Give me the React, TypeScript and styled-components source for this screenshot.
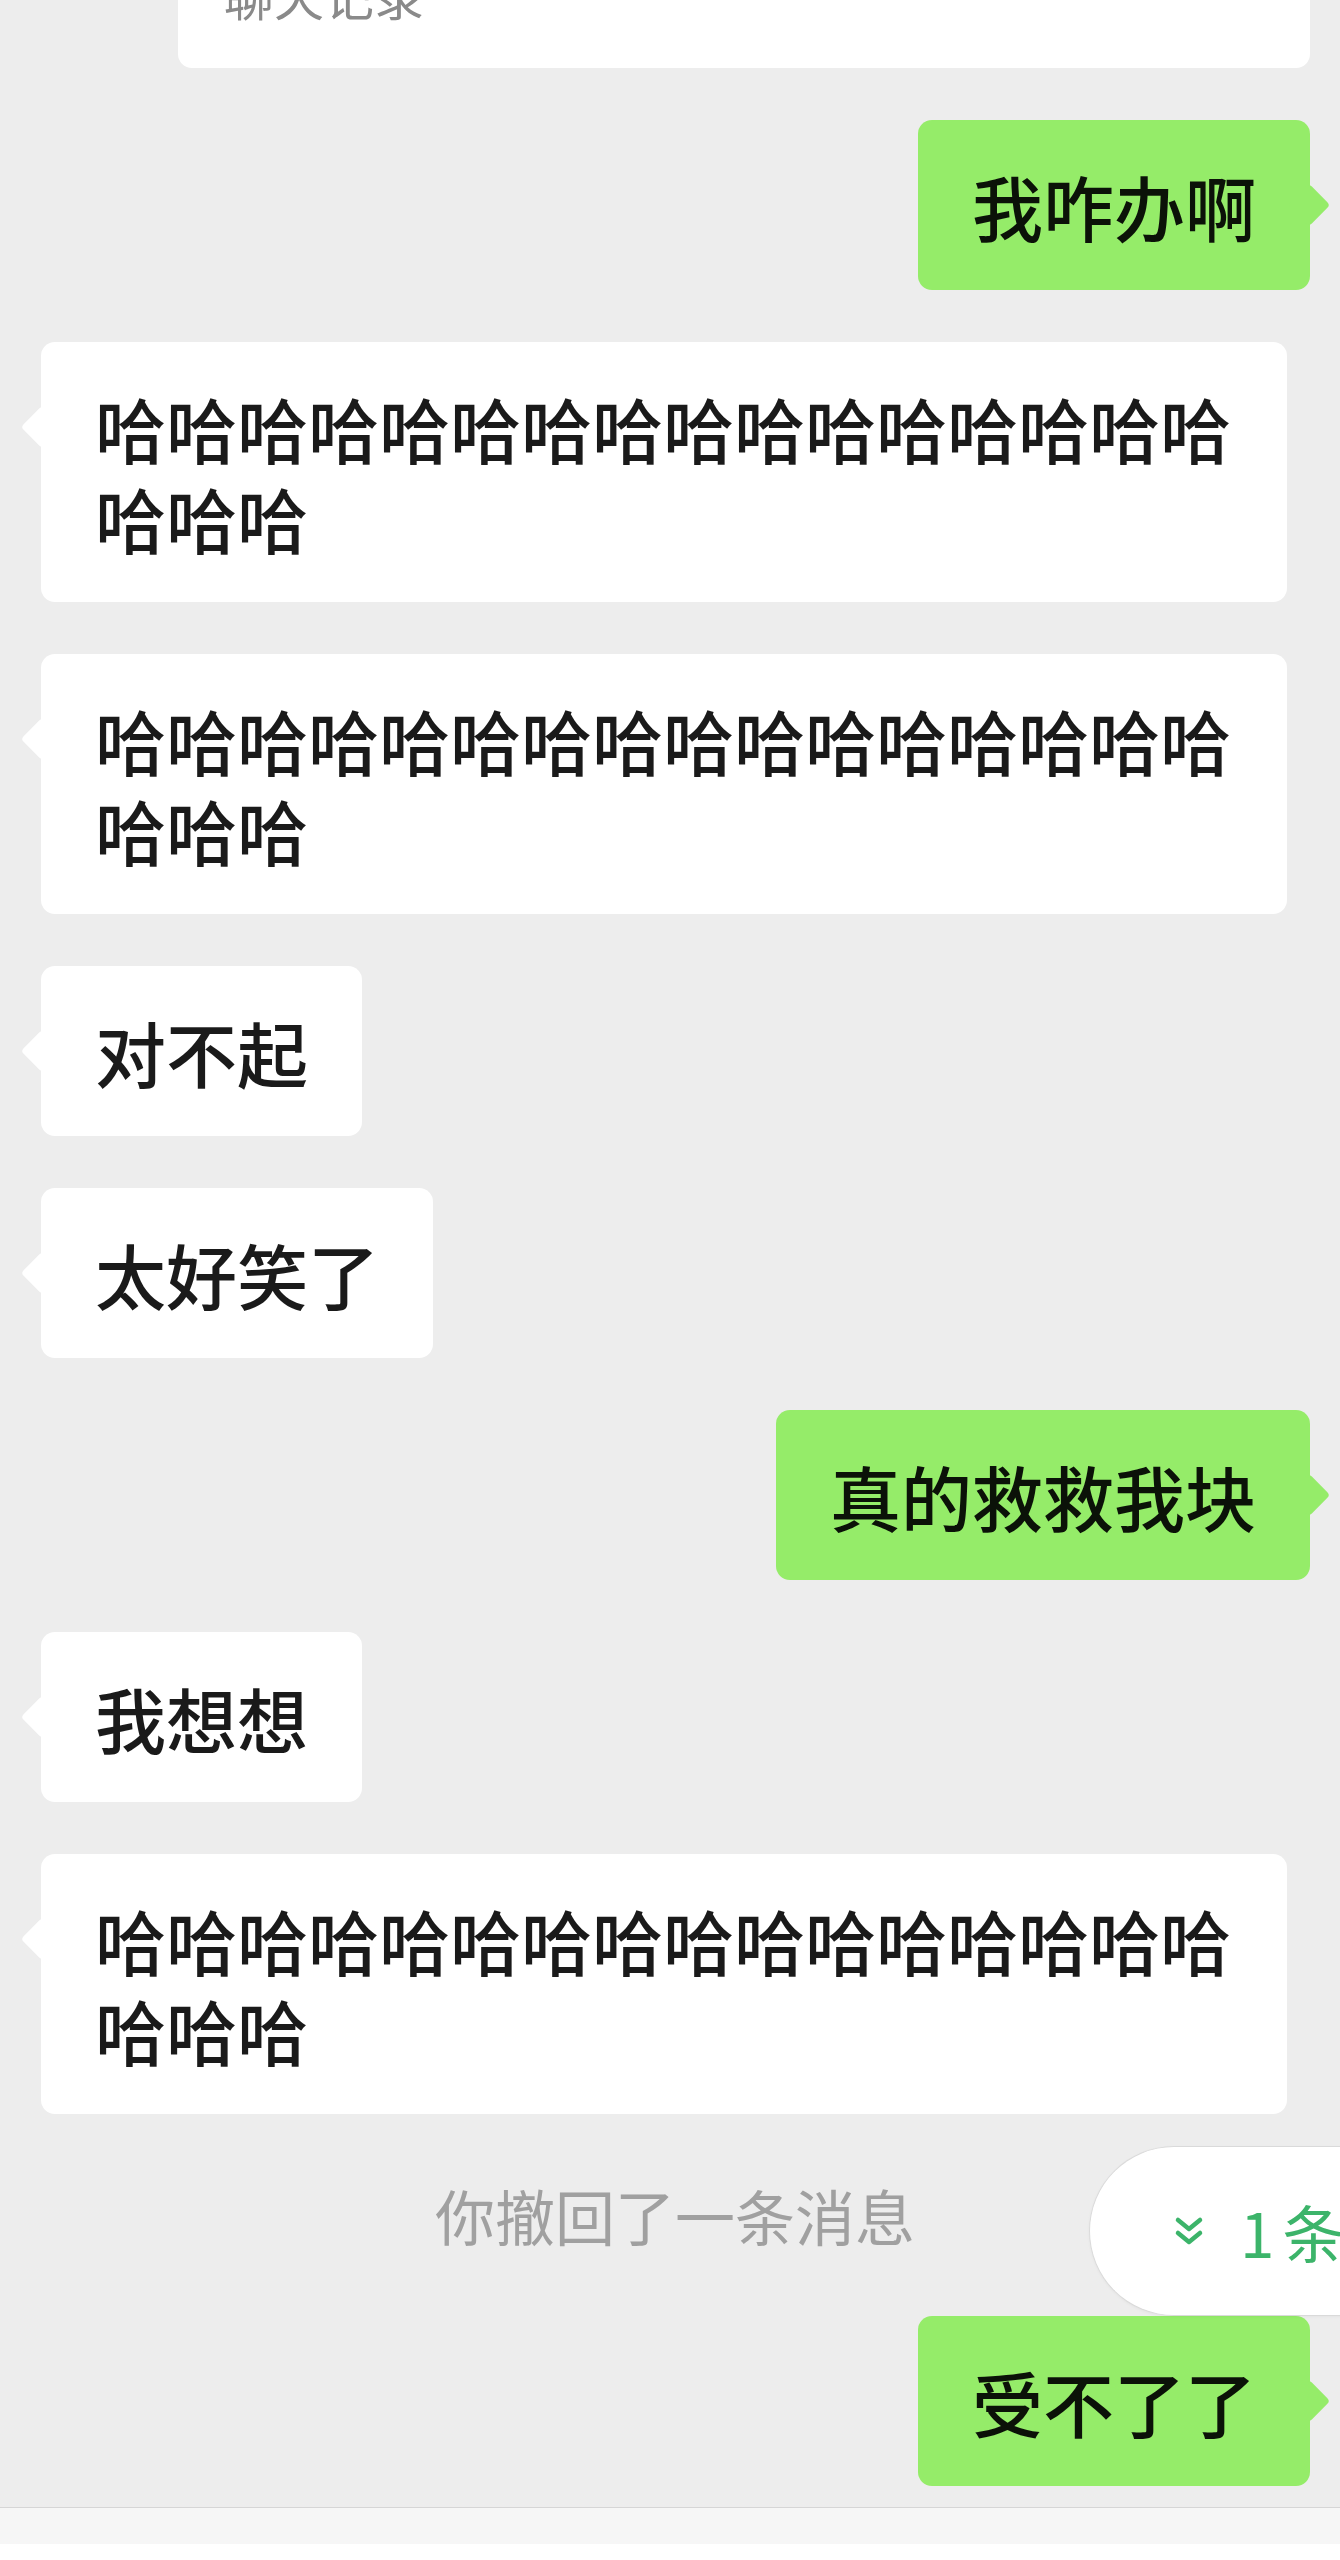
import React from 'react';
import styled, { createGlobalStyle } from 'styled-components';

const GlobalStyle = createGlobalStyle`
  html, body {
    margin: 0;
    padding: 0;
    background: #ededed;
  }
  * {
    box-sizing: border-box;
  }
`;

type Side = 'left' | 'right';

const messages: { side: Side; text: string }[] = [
  { side: 'right', text: '我咋办啊' },
  { side: 'left', text: '哈哈哈哈哈哈哈哈哈哈哈哈哈哈哈哈哈哈哈' },
  { side: 'left', text: '哈哈哈哈哈哈哈哈哈哈哈哈哈哈哈哈哈哈哈' },
  { side: 'left', text: '对不起' },
  { side: 'left', text: '太好笑了' },
  { side: 'right', text: '真的救救我块' },
  { side: 'left', text: '我想想' },
  { side: 'left', text: '哈哈哈哈哈哈哈哈哈哈哈哈哈哈哈哈哈哈哈' },
];

function ChevronsDown() {
  return (
    <svg width="30" height="32" viewBox="0 0 30 32" fill="none">
      <path d="M4 5 L15 14 L26 5" stroke="#3cb46a" strokeWidth="4.5" strokeLinecap="round" strokeLinejoin="round" />
      <path d="M4 18 L15 27 L26 18" stroke="#3cb46a" strokeWidth="4.5" strokeLinecap="round" strokeLinejoin="round" />
    </svg>
  );
}

export default function App() {
  return (
    <Page>
      <GlobalStyle />
      <Thread>
        <Row $side="right">
          <RecordCard>
            <RecordLabel>聊天记录</RecordLabel>
          </RecordCard>
        </Row>

        {messages.map((m, i) => (
          <Row key={i} $side={m.side}>
            <Bubble $side={m.side}>{m.text}</Bubble>
          </Row>
        ))}

        <SystemNote>你撤回了一条消息</SystemNote>

        <Row $side="right">
          <Bubble $side="right">受不了了</Bubble>
        </Row>
      </Thread>

      <NewMessagePill>
        <ChevronsDown />
        <PillText>1条</PillText>
      </NewMessagePill>

      <InputBar>
        <InputStrip />
      </InputBar>
    </Page>
  );
}

const Page = styled.div`
  position: relative;
  width: 1340px;
  height: 2560px;
  overflow: hidden;
  display: flex;
  flex-direction: column;
  background: #ededed;
  font-family: 'Noto Sans CJK SC', 'Noto Sans', sans-serif;
`;

const Thread = styled.div`
  display: flex;
  flex-direction: column;
  row-gap: 52px;
  padding: 0 30px 0 41px;
`;

const Row = styled.div<{ $side: Side }>`
  display: flex;
  justify-content: ${(p) => (p.$side === 'right' ? 'flex-end' : 'flex-start')};
`;

const RecordCard = styled.div`
  width: 1132px;
  margin-top: -35px;
  padding: 0 46px 45px;
  background: #ffffff;
  border-radius: 0 0 14px 14px;
`;

const RecordLabel = styled.div`
  font-size: 50px;
  line-height: 58px;
  color: #8a8a8a;
`;

const Bubble = styled.div<{ $side: Side }>`
  position: relative;
  max-width: 1246px;
  padding: 40px 54px;
  border-radius: 14px;
  font-size: 71px;
  font-weight: 500;
  line-height: 90px;
  color: ${(p) => (p.$side === 'right' ? '#0b1208' : '#1a1a1a')};
  background: ${(p) => (p.$side === 'right' ? '#95ec69' : '#ffffff')};

  &::before {
    content: '';
    position: absolute;
    top: 70px;
    ${(p) => (p.$side === 'right' ? 'right: -14px;' : 'left: -14px;')}
    width: 30px;
    height: 30px;
    border-radius: 4px;
    background: inherit;
    transform: rotate(45deg);
  }
`;

const SystemNote = styled.div`
  height: 98px;
  line-height: 98px;
  text-align: center;
  font-size: 60px;
  color: #a0a0a0;
  margin-right: -30px;
  margin-left: -41px;
  padding-left: 10px;
`;

const NewMessagePill = styled.div`
  position: absolute;
  top: 2146px;
  left: 1089px;
  width: 320px;
  height: 170px;
  display: flex;
  align-items: center;
  column-gap: 36px;
  padding-left: 84px;
  background: #ffffff;
  border: 1.5px solid #dadada;
  border-right: none;
  border-radius: 85px 0 0 85px;
  box-shadow: 0 1px 3px rgba(0, 0, 0, 0.04);
`;

const PillText = styled.span`
  font-size: 62px;
  line-height: 1;
  letter-spacing: 8px;
  color: #3cb46a;
  white-space: nowrap;
`;

const InputBar = styled.div`
  margin-top: 21px;
  flex: 1;
  display: flex;
  flex-direction: column;
  background: #ffffff;
  border-top: 1px solid #d6d6d6;
`;

const InputStrip = styled.div`
  height: 36px;
  background: #f6f6f6;
`;
